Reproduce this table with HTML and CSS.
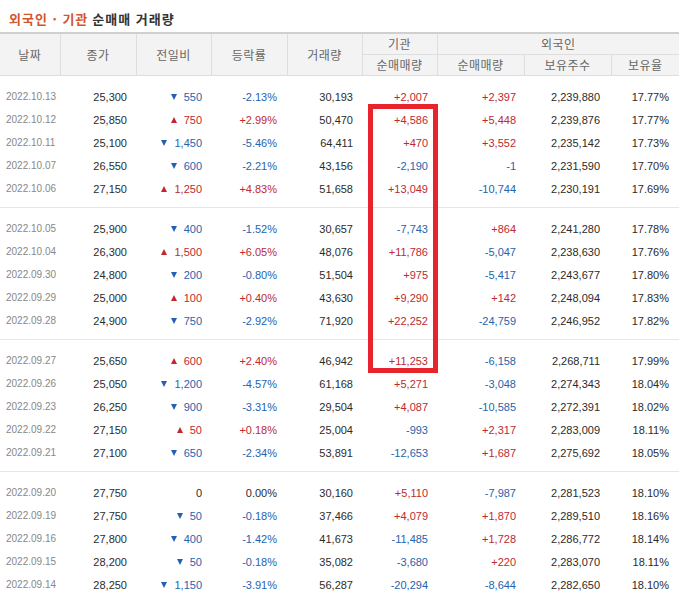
FILE: index.html
```html
<!DOCTYPE html>
<html lang="ko">
<head>
<meta charset="utf-8">
<title>외국인 · 기관 순매매 거래량</title>
<link rel="stylesheet" href="styles.css">
</head>
<body>
<div class="wrap">
  <h3 class="title"><em>외국인 · 기관</em> 순매매 거래량</h3>
  <table class="tbl">
    <colgroup>
      <col class="c1"><col class="c2"><col class="c3"><col class="c4"><col class="c5"><col class="c6"><col class="c7"><col class="c8"><col class="c9">
    </colgroup>
    <thead>
      <tr>
        <th rowspan="2">날짜</th>
        <th rowspan="2">종가</th>
        <th rowspan="2">전일비</th>
        <th rowspan="2">등락률</th>
        <th rowspan="2">거래량</th>
        <th>기관</th>
        <th colspan="3">외국인</th>
      </tr>
      <tr class="sub">
        <th>순매매량</th>
        <th>순매매량</th>
        <th>보유주수</th>
        <th>보유율</th>
      </tr>
    </thead>
    <tbody>
      <tr class="gap-top"><td colspan="9"></td></tr>
      <tr><td>2022.10.13</td><td>25,300</td><td class="dn"><i class="tri"></i>550</td><td class="dn">-2.13%</td><td>30,193</td><td class="up">+2,007</td><td class="up">+2,397</td><td>2,239,880</td><td>17.77%</td></tr>
      <tr><td>2022.10.12</td><td>25,850</td><td class="up"><i class="tri"></i>750</td><td class="up">+2.99%</td><td>50,470</td><td class="up">+4,586</td><td class="up">+5,448</td><td>2,239,876</td><td>17.77%</td></tr>
      <tr><td>2022.10.11</td><td>25,100</td><td class="dn"><i class="tri"></i>1,450</td><td class="dn">-5.46%</td><td>64,411</td><td class="up">+470</td><td class="up">+3,552</td><td>2,235,142</td><td>17.73%</td></tr>
      <tr><td>2022.10.07</td><td>26,550</td><td class="dn"><i class="tri"></i>600</td><td class="dn">-2.21%</td><td>43,156</td><td class="dn">-2,190</td><td class="dn">-1</td><td>2,231,590</td><td>17.70%</td></tr>
      <tr><td>2022.10.06</td><td>27,150</td><td class="up"><i class="tri"></i>1,250</td><td class="up">+4.83%</td><td>51,658</td><td class="up">+13,049</td><td class="dn">-10,744</td><td>2,230,191</td><td>17.69%</td></tr>
      <tr class="gap-bot"><td colspan="9"></td></tr>
      <tr class="gap-top"><td colspan="9"></td></tr>
      <tr><td>2022.10.05</td><td>25,900</td><td class="dn"><i class="tri"></i>400</td><td class="dn">-1.52%</td><td>30,657</td><td class="dn">-7,743</td><td class="up">+864</td><td>2,241,280</td><td>17.78%</td></tr>
      <tr><td>2022.10.04</td><td>26,300</td><td class="up"><i class="tri"></i>1,500</td><td class="up">+6.05%</td><td>48,076</td><td class="up">+11,786</td><td class="dn">-5,047</td><td>2,238,630</td><td>17.76%</td></tr>
      <tr><td>2022.09.30</td><td>24,800</td><td class="dn"><i class="tri"></i>200</td><td class="dn">-0.80%</td><td>51,504</td><td class="up">+975</td><td class="dn">-5,417</td><td>2,243,677</td><td>17.80%</td></tr>
      <tr><td>2022.09.29</td><td>25,000</td><td class="up"><i class="tri"></i>100</td><td class="up">+0.40%</td><td>43,630</td><td class="up">+9,290</td><td class="up">+142</td><td>2,248,094</td><td>17.83%</td></tr>
      <tr><td>2022.09.28</td><td>24,900</td><td class="dn"><i class="tri"></i>750</td><td class="dn">-2.92%</td><td>71,920</td><td class="up">+22,252</td><td class="dn">-24,759</td><td>2,246,952</td><td>17.82%</td></tr>
      <tr class="gap-bot"><td colspan="9"></td></tr>
      <tr class="gap-top"><td colspan="9"></td></tr>
      <tr><td>2022.09.27</td><td>25,650</td><td class="up"><i class="tri"></i>600</td><td class="up">+2.40%</td><td>46,942</td><td class="up">+11,253</td><td class="dn">-6,158</td><td>2,268,711</td><td>17.99%</td></tr>
      <tr><td>2022.09.26</td><td>25,050</td><td class="dn"><i class="tri"></i>1,200</td><td class="dn">-4.57%</td><td>61,168</td><td class="up">+5,271</td><td class="dn">-3,048</td><td>2,274,343</td><td>18.04%</td></tr>
      <tr><td>2022.09.23</td><td>26,250</td><td class="dn"><i class="tri"></i>900</td><td class="dn">-3.31%</td><td>29,504</td><td class="up">+4,087</td><td class="dn">-10,585</td><td>2,272,391</td><td>18.02%</td></tr>
      <tr><td>2022.09.22</td><td>27,150</td><td class="up"><i class="tri"></i>50</td><td class="up">+0.18%</td><td>25,004</td><td class="dn">-993</td><td class="up">+2,317</td><td>2,283,009</td><td>18.11%</td></tr>
      <tr><td>2022.09.21</td><td>27,100</td><td class="dn"><i class="tri"></i>650</td><td class="dn">-2.34%</td><td>53,891</td><td class="dn">-12,653</td><td class="up">+1,687</td><td>2,275,692</td><td>18.05%</td></tr>
      <tr class="gap-bot"><td colspan="9"></td></tr>
      <tr class="gap-top"><td colspan="9"></td></tr>
      <tr><td>2022.09.20</td><td>27,750</td><td>0</td><td>0.00%</td><td>30,160</td><td class="up">+5,110</td><td class="dn">-7,987</td><td>2,281,523</td><td>18.10%</td></tr>
      <tr><td>2022.09.19</td><td>27,750</td><td class="dn"><i class="tri"></i>50</td><td class="dn">-0.18%</td><td>37,466</td><td class="up">+4,079</td><td class="up">+1,870</td><td>2,289,510</td><td>18.16%</td></tr>
      <tr><td>2022.09.16</td><td>27,800</td><td class="dn"><i class="tri"></i>400</td><td class="dn">-1.42%</td><td>41,673</td><td class="dn">-11,485</td><td class="up">+1,728</td><td>2,286,772</td><td>18.14%</td></tr>
      <tr><td>2022.09.15</td><td>28,200</td><td class="dn"><i class="tri"></i>50</td><td class="dn">-0.18%</td><td>35,082</td><td class="dn">-3,680</td><td class="up">+220</td><td>2,283,070</td><td>18.11%</td></tr>
      <tr><td>2022.09.14</td><td>28,250</td><td class="dn"><i class="tri"></i>1,150</td><td class="dn">-3.91%</td><td>56,287</td><td class="dn">-20,294</td><td class="dn">-8,644</td><td>2,282,650</td><td>18.10%</td></tr>
    </tbody>
  </table>
  <div class="highlight"></div>
</div>
</body>
</html>
```

FILE: styles.css
```css
html, body {
  margin: 0;
  padding: 0;
  background: #fff;
}
.wrap {
  position: relative;
  width: 679px;
  font-family: "Liberation Sans", "Noto Sans CJK KR", sans-serif;
}
.title {
  margin: 0;
  height: 32px;
  padding-left: 9px;
  padding-top: 4px;
  box-sizing: border-box;
  display: flex;
  align-items: center;
  font-family: "Noto Sans CJK KR", sans-serif;
  font-size: 13px;
  font-weight: bold;
  letter-spacing: 1px;
  color: #333;
}
.title em {
  font-style: normal;
  color: #d4562c;
  margin-right: 4px;
}
.tbl {
  width: 679px;
  table-layout: fixed;
  border-collapse: collapse;
  border-spacing: 0;
}
.c1 { width: 60px; }
.c2 { width: 76px; }
.c3 { width: 75px; }
.c4 { width: 76px; }
.c5 { width: 75px; }
.c6 { width: 75px; }
.c7 { width: 87px; }
.c8 { width: 87px; }
.c9 { width: 68px; }

.tbl thead tr:first-child th {
  border-top: 2px solid #cfcfcf;
}
.tbl th {
  height: 20px;
  padding: 0;
  background: #f3f3f3;
  border: 1px solid #dedede;
  font-family: "Noto Sans CJK KR", sans-serif;
  font-weight: normal;
  font-size: 12px;
  letter-spacing: 0.5px;
  color: #666;
  text-align: center;
  line-height: 18px;
}
.tbl th:first-child { border-left: 0; }
.tbl th:last-child { border-right: 0; }

.tbl td {
  height: 22.8px;
  padding: 0 9px 0 0;
  font-size: 11px;
  color: #2b2b2b;
  text-align: right;
  white-space: nowrap;
  line-height: 14px;
}
.tbl td:first-child {
  text-align: left;
  padding-left: 6px;
  padding-right: 0;
  font-size: 10px;
  color: #888;
}
.tbl td:nth-child(4) { padding-right: 10px; }
.tbl td:nth-child(7) { padding-right: 8px; }
.tbl td:nth-child(8) { padding-right: 11px; }
.tbl td:nth-child(9) { padding-right: 10px; }

.tbl .gap-top td { height: 10px; padding: 0; }
.tbl .gap-bot td { height: 7px; padding: 0; border-bottom: 1px solid #e6e6e6; }

.up { color: #bd2a30 !important; }
.dn { color: #2563ae !important; }

.tri {
  display: inline-block;
  width: 0;
  height: 0;
  border-left: 3.5px solid transparent;
  border-right: 3.5px solid transparent;
  margin-right: 7px;
  vertical-align: 1px;
}
.up .tri { border-bottom: 6px solid #c4262e; }
.dn .tri { border-top: 6px solid #2461ae; }

.highlight {
  position: absolute;
  left: 368px;
  top: 104px;
  width: 70px;
  height: 269px;
  box-sizing: border-box;
  border: 5px solid #e8232b;
  pointer-events: none;
}
```
